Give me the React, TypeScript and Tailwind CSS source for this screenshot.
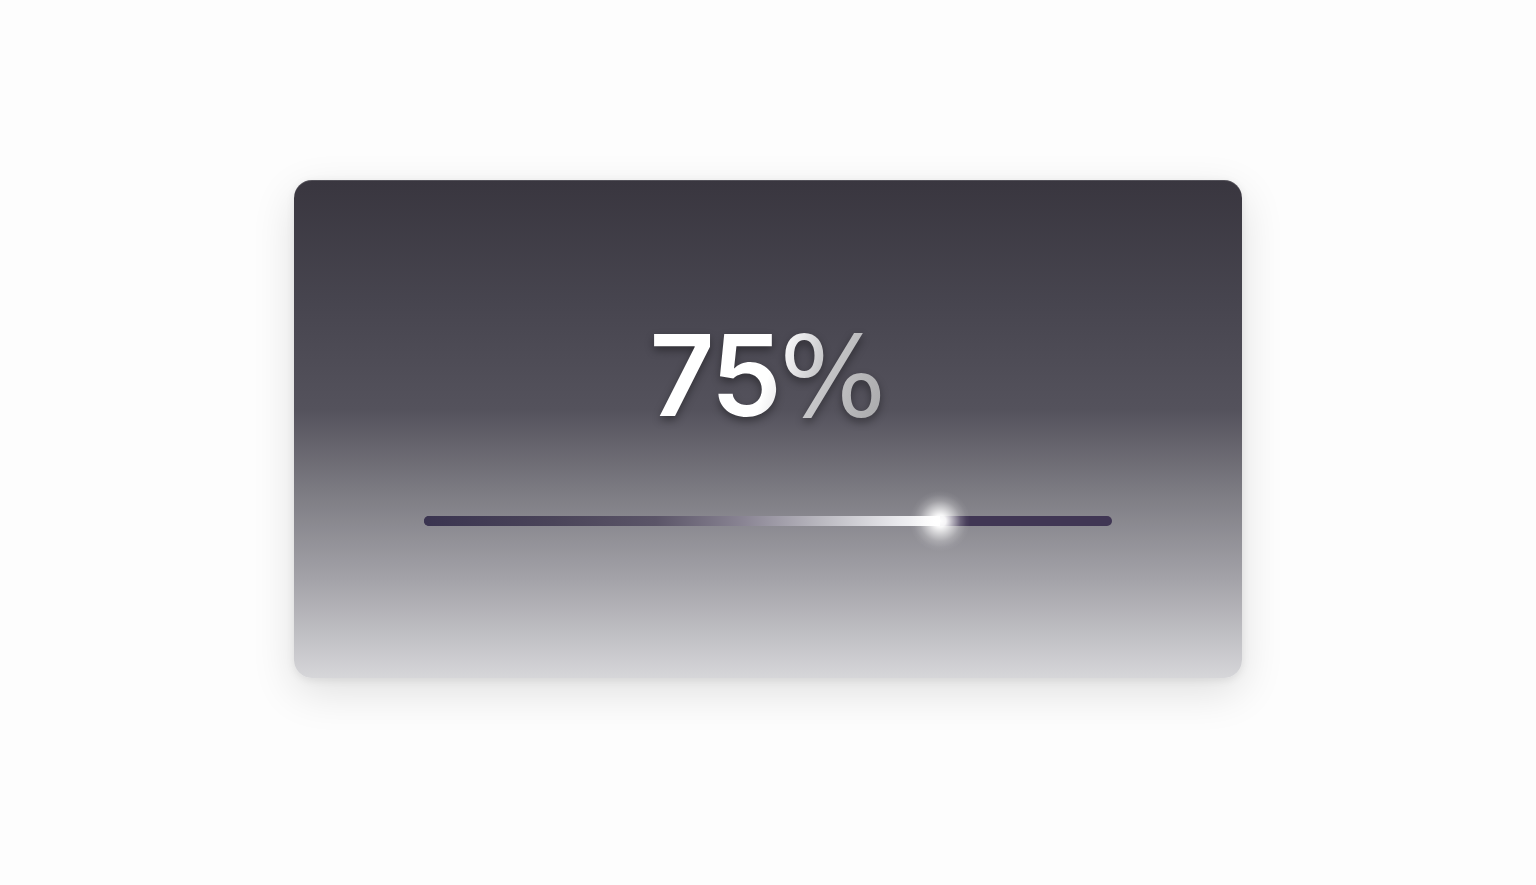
import React from "react";

const value = 75;

export default function App() {
  return (
    <div className="min-h-[885px] w-full bg-[#fdfdfd] flex justify-center pt-[180px]">
      <div className="relative w-[948px] h-[498px] rounded-[18px] bg-[linear-gradient(to_bottom,#39363f_0%,#47454f_25%,#54525c_46%,#7b7a81_62%,#a3a2a8_80%,#d6d6d9_100%)] shadow-[0_14px_44px_rgba(0,0,0,0.12),0_2px_8px_rgba(0,0,0,0.08),inset_0_1px_0_rgba(255,255,255,0.14)] flex flex-col items-center pt-[139px]">
        <div
          className="text-[113px] leading-none whitespace-nowrap bg-[linear-gradient(108deg,#ffffff_0%,#ffffff_50%,#e4e4e6_59%,#c8c8ca_68%,#a6a6a8_100%)] bg-clip-text text-transparent drop-shadow-[0_4px_4px_rgba(0,0,0,0.38)]"
          style={{ fontFamily: "Inter, sans-serif" }}
        >
          <span className="font-semibold tracking-[-0.025em]">{value}</span>
          <span className="text-[113px] font-normal" style={{ fontFamily: "'DejaVu Sans', sans-serif" }}>
            %
          </span>
        </div>
        <div className="relative mt-[82px] w-[688px] h-[10px] rounded-full bg-[#403654]">
          <div
            className="absolute left-0 top-0 h-full rounded-l-full bg-[linear-gradient(to_right,#3a3450_0%,#4a4459_25%,#5b5568_45%,#8a8594_62%,#bdbcc3_78%,#e9e9ed_92%,#ffffff_100%)]"
            style={{ width: `${value}%` }}
          />
          <div
            className="absolute top-1/2 w-[60px] h-[60px] -translate-x-1/2 -translate-y-1/2 rounded-full bg-[radial-gradient(circle,rgba(255,255,255,1)_0%,rgba(255,255,255,0.95)_14%,rgba(255,255,255,0.6)_30%,rgba(255,255,255,0.22)_48%,rgba(255,255,255,0.05)_62%,rgba(255,255,255,0)_72%)]"
            style={{ left: `${value}%` }}
          />
        </div>
      </div>
    </div>
  );
}
